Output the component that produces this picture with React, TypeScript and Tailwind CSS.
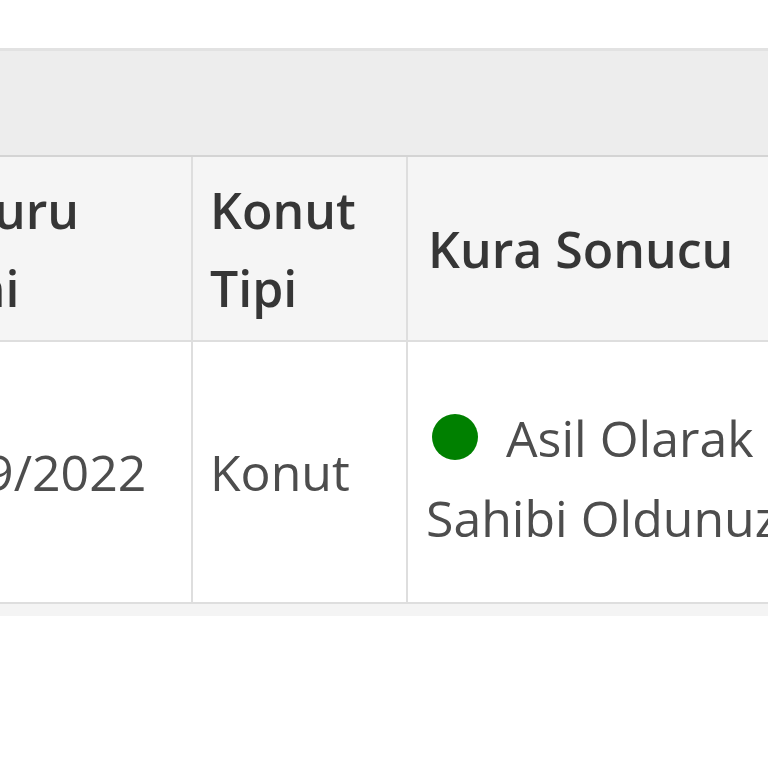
const font = { fontFamily: '"Open Sans", "Noto Sans", sans-serif' };

export default function App() {
  return (
    <div className="w-[768px] h-[768px] overflow-hidden bg-white" style={font}>
      <div className="h-12 bg-white" />

      {/* panel heading */}
      <div className="h-[109px] border-t-[3px] border-b-2 border-t-[#e2e2e2] border-b-[#d4d4d4] bg-[#ededed]" />

      <div className="overflow-hidden">
        <table className="-ml-[139px] w-[1066px] table-fixed border-collapse text-[50px] leading-[78px]">
          <colgroup>
            <col className="w-[331px]" />
            <col className="w-[215px]" />
            <col className="w-[520px]" />
          </colgroup>
          <thead>
            <tr className="bg-[#f5f5f5] text-[#363636]">
              <th className="h-[184px] px-5 text-left align-middle font-semibold border-r-2 border-b-2 border-[#dedede]">
                Başvuru Tarihi
              </th>
              <th className="px-[17px] text-left align-middle font-semibold border-r-2 border-b-2 border-[#dedede]">
                Konut Tipi
              </th>
              <th className="px-5 text-left align-middle font-semibold border-b-2 border-[#dedede]">
                Kura Sonucu
              </th>
            </tr>
          </thead>
          <tbody>
            <tr className="text-[#4d4d4d]">
              <td className="h-[262px] px-5 align-middle border-r-2 border-b-2 border-[#dedede]">24/09/2022</td>
              <td className="px-[17px] align-middle border-r-2 border-b-2 border-[#dedede]">Konut</td>
              <td className="px-[18px] pt-3 align-middle leading-[80px] border-b-2 border-[#dedede]">
                <span className="inline-block w-[46px] h-[46px] ml-[6px] mr-[28px] rounded-full bg-[#008000] align-[-3px]" />
                Asil Olarak Hak Sahibi Oldunuz
              </td>
            </tr>
          </tbody>
        </table>
      </div>

      <div className="h-[12px] bg-[#f4f4f4]" />
    </div>
  );
}
